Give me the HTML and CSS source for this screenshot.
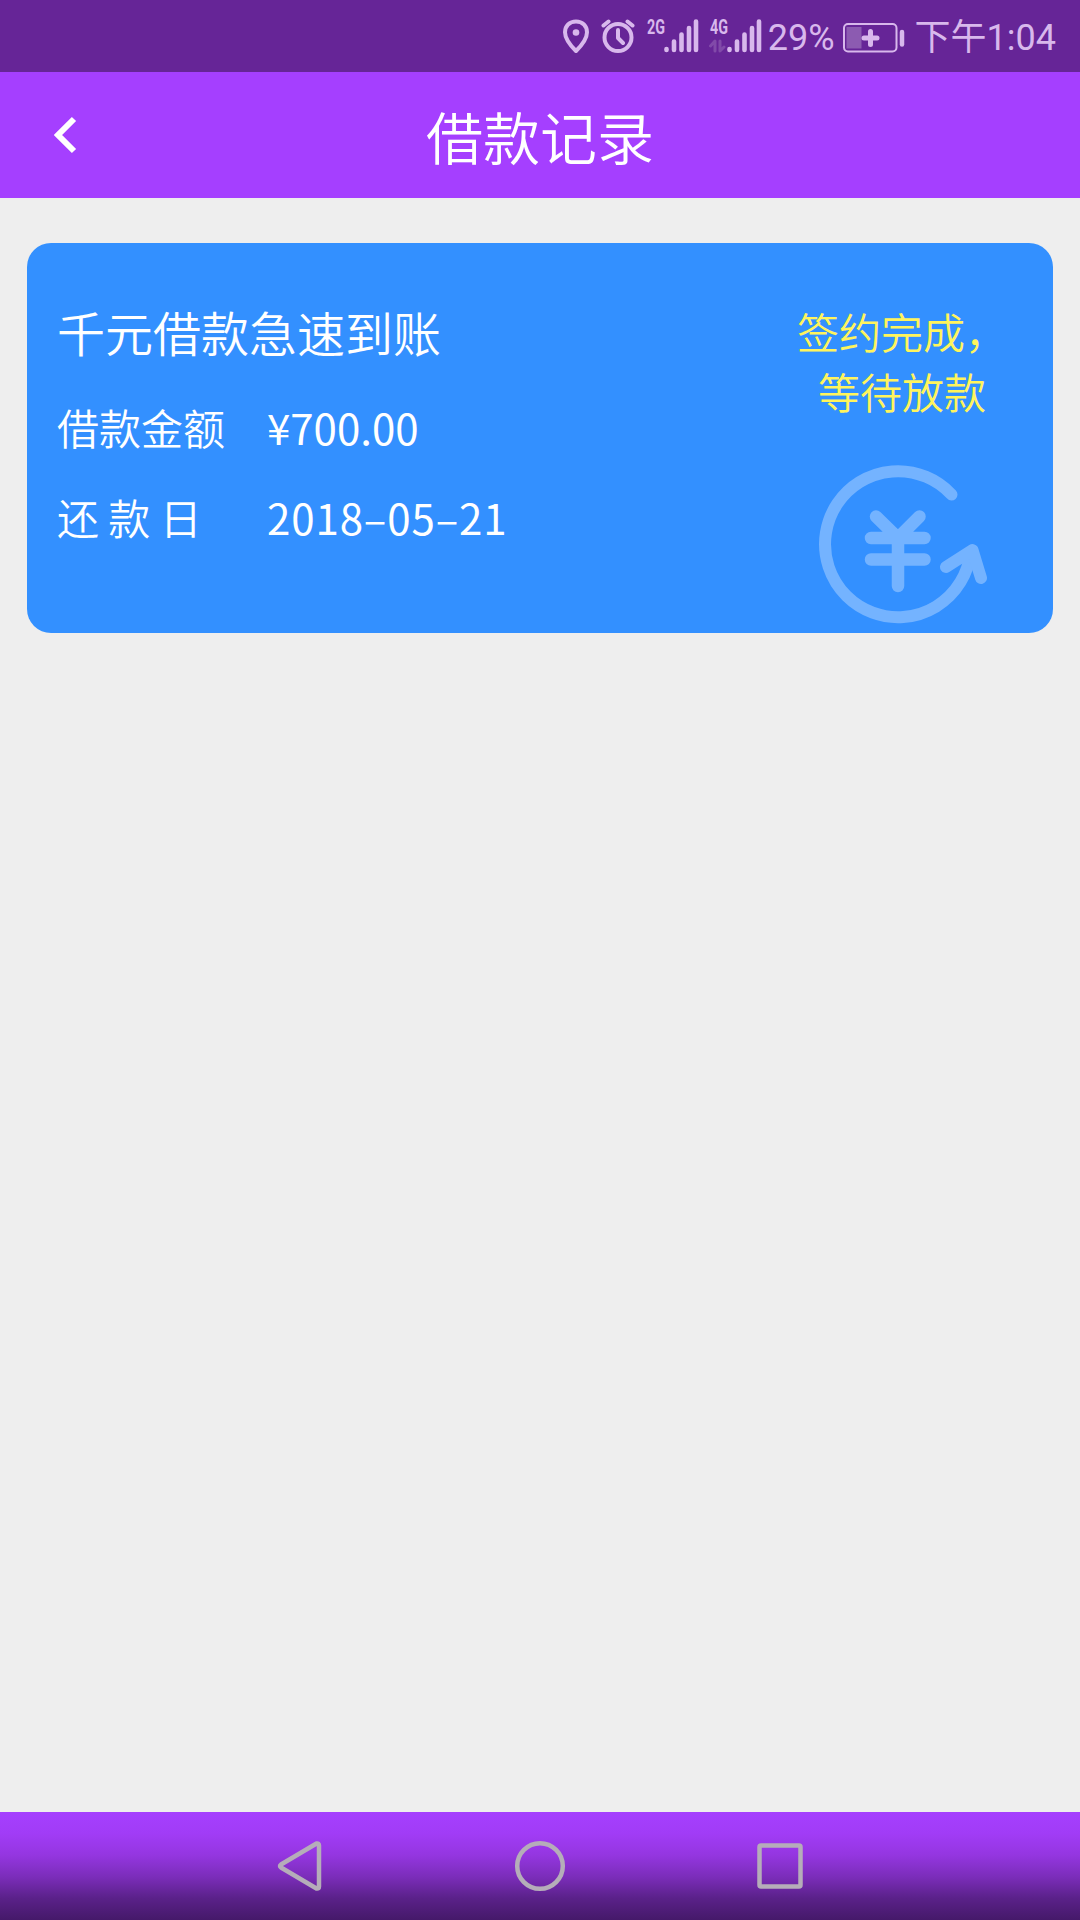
FILE: index.html
```html
<!DOCTYPE html>
<html lang="zh-CN">
  <head>
    <meta charset="UTF-8" />
    <meta name="viewport" content="width=device-width, initial-scale=1.0" />
    <title>借款记录</title>
    <link rel="stylesheet" href="styles.css">
  </head>
  <body>
    <div class="status-bar">
      <svg class="pin-icon" width="28" height="36" viewBox="0 0 28 36">
        <path d="M14 3.5C7.500 3.500 3 8 3 14.200C3 19.500 8 27 14 33C20 27 25 19.500 25 14.200C25 8 20.500 3.500 14 3.500Z" />
        <circle class="fill" cx="14" cy="14.500" r="3.300" />
      </svg>
      <svg class="alarm-icon" width="34" height="36" viewBox="0 0 34 36">
        <circle cx="17" cy="19.500" r="13.500" />
        <path d="M17 12V20L22 25M2.500 7.500L7.500 3.500M31.500 7.500L26.500 3.500" />
      </svg>
      <svg class="signal-icon" width="54" height="52" viewBox="0 -8 54 52">
        <text x="1" y="16" textLength="18" lengthAdjust="spacingAndGlyphs">2G</text>
        <path d="M20.500 31V32M28 23.500V32M35.500 16.500V32M43 10V32M50 3.500V32" />
      </svg>
      <svg class="signal-icon" width="54" height="52" viewBox="0 -8 54 52">
        <text x="1" y="16" textLength="18" lengthAdjust="spacingAndGlyphs">4G</text>
        <path class="transfer" d="M1.500 28L6 23V33M11 23V33L15 29" />
        <path d="M20.500 31V32M28 23.500V32M35.500 16.500V32M43 10V32M50 3.500V32" />
      </svg>
      <span class="percent">29%</span>
      <svg class="battery-icon" width="62" height="30" viewBox="0 0 62 30">
        <rect class="outline" x="1" y="1" width="52.500" height="27.500" rx="4" />
        <rect class="level" x="3.500" y="4" width="15" height="21.500" />
        <path class="plus" d="M21 15H34M27.500 8.500V21.500" />
        <path class="cap" d="M59 9V21.500" />
      </svg>
      <span class="time">下午1:04</span>
    </div>

    <header class="header">
      <svg class="back-icon" width="24" height="38" viewBox="0 0 24 38">
        <path d="M20 3L4 19L20 35" />
      </svg>
      <h1>借款记录</h1>
    </header>

    <main class="content">
      <div class="card">
        <div class="loan-info">
          <h2>千元借款急速到账</h2>
          <div class="row">
            <span class="label">借款金额</span>
            <span class="value">¥700.00</span>
          </div>
          <div class="row">
            <span class="label">还 款 日</span>
            <span class="value date">2018–05–21</span>
          </div>
        </div>
        <div class="loan-status">
          <p>签约完成<span class="comma">，</span><br>等待放款</p>
          <svg class="yen-icon" width="170" height="160" viewBox="0 0 170 160">
            <path class="ring" d="M133.500 30.500A73 73 0 1 0 152.500 89" />
            <path class="arrow" d="M128 103L154.500 86L163 114" />
            <path class="yen" d="M58 52.500L80 74L101.500 52.500M53 74H106.500M53 95.500H106.500M80 74V122" />
          </svg>
        </div>
      </div>
    </main>

    <nav class="nav-bar">
      <svg width="52" height="52" viewBox="0 0 52 52">
        <path d="M7 27.500Q5 26 7 24.500L42.500 3.500Q45 3 45 5.500V46.500Q45 49 42.500 48.500Z" />
      </svg>
      <svg width="52" height="52" viewBox="0 0 52 52">
        <circle cx="26" cy="26" r="22.800" />
      </svg>
      <svg width="52" height="52" viewBox="0 0 52 52">
        <rect x="5.500" y="5.500" width="41" height="41" rx="1.500" />
      </svg>
    </nav>
  </body>
</html>
```

FILE: styles.css
```css
* {
  box-sizing: border-box;
  margin: 0;
  padding: 0;
}

body {
  display: flex;
  flex-direction: column;
  height: 1920px;
  background-color: #eee;
  font-family: "Noto Sans CJK SC", sans-serif;
}

svg {
  flex: none;
  fill: none;
  stroke-linecap: round;
  stroke-linejoin: round;
}

.status-bar {
  display: flex;
  align-items: center;
  justify-content: flex-end;
  height: 72px;
  padding-right: 24px;
  background-color: #662597;
  color: #d8b8ec;
  font-family: Roboto, "Noto Sans CJK SC", sans-serif;
  font-size: 36px;
  line-height: 72px;
}

.status-bar svg {
  stroke: #d8b8ec;
  stroke-width: 4;
}

.status-bar .fill {
  fill: #d8b8ec;
  stroke: none;
}

.pin-icon {
  margin-right: 11px;
}

.alarm-icon {
  margin-right: 11px;
}

.signal-icon {
  margin-right: 9px;
}

.status-bar .signal-icon {
  stroke-width: 4.6;
}

.signal-icon + .percent {
  margin-left: -4px;
}

.signal-icon text {
  fill: #d8b8ec;
  stroke: none;
  font-size: 21px;
  font-weight: bold;
}

.status-bar .transfer {
  stroke: #814aa9;
  stroke-width: 3;
}

.percent,
.time {
  padding-top: 4px;
}

.percent {
  margin-right: 8px;
}

.battery-icon {
  margin-top: 3px;
  margin-right: 10px;
}

.battery-icon .outline {
  stroke-width: 2;
}

.status-bar .level {
  fill: #8c5bb1;
  stroke: none;
}

.battery-icon .plus {
  stroke-width: 5;
}

.battery-icon .cap {
  stroke-width: 4.5;
}

.header {
  position: relative;
  display: flex;
  align-items: center;
  justify-content: center;
  height: 126px;
  background-color: #a53fff;
  color: #fff;
}

.header h1 {
  font-size: 57px;
  font-weight: 350;
}

.back-icon {
  position: absolute;
  left: 54px;
  top: 44px;
  stroke: #fff;
  stroke-width: 6;
  stroke-linecap: butt;
  stroke-linejoin: miter;
}

.content {
  flex: 1;
  padding: 45px 27px;
}

.card {
  display: flex;
  justify-content: space-between;
  height: 390px;
  padding: 58px 65px 0 30px;
  border-radius: 24px;
  background-color: #3390ff;
  color: #fff;
  font-size: 42px;
  font-weight: 350;
}

.card h2 {
  margin-bottom: 21px;
  font-size: 48px;
  font-weight: 350;
  line-height: 60px;
}

.row {
  display: flex;
  height: 90px;
  line-height: 90px;
}

.label {
  width: 210px;
}

.value {
  font-weight: normal;
}

.date {
  letter-spacing: 0.9px;
}

.loan-status {
  display: flex;
  flex-direction: column;
  align-items: flex-end;
  line-height: 60px;
}

.loan-status p {
  margin-right: 2px;
  color: #fff45c;
  text-align: right;
  white-space: nowrap;
}

.comma {
  margin-right: -21px;
}

.yen-icon {
  margin-top: 43px;
  stroke: #74b3ff;
  stroke-width: 12;
}

.yen-icon .yen {
  stroke-width: 12.5;
}

.nav-bar {
  display: flex;
  align-items: center;
  justify-content: center;
  gap: 188px;
  height: 108px;
  background: linear-gradient(#a53fff 0%, #a13cf6 20%, #9436e0 40%, #7b2dba 60%, #5a2189 80%, #451969 100%);
}

.nav-bar svg {
  stroke: #b5adb9;
  stroke-width: 4.5;
}
```
